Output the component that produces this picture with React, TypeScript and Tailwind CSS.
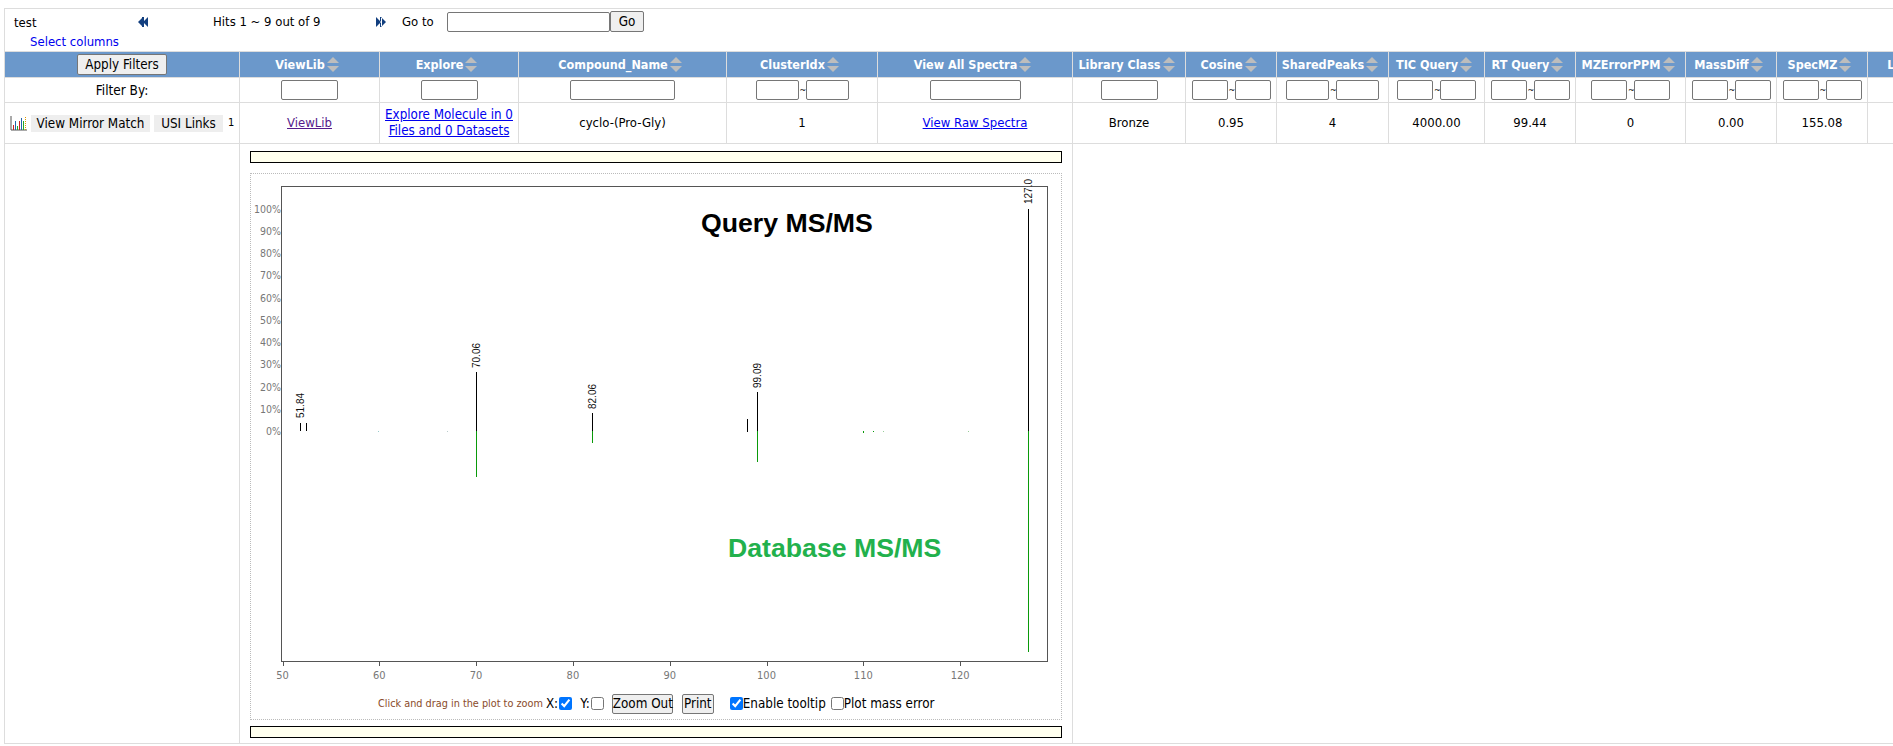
const font = "font-['DejaVu_Sans',sans-serif] [font-stretch:condensed]";

function Sort() {
  return (
    <svg width="12" height="15" viewBox="0 0 12 15" className="inline-block ml-[2px] align-[-3px]">
      <path d="M6 0 L12 6 H0 Z" fill="#bdbdbd" />
      <path d="M0 9 H12 L6 15 Z" fill="#bdbdbd" />
    </svg>
  );
}

function Box({ w }: { w: number }) {
  return <input type="text" style={{ width: w }} className="h-5 bg-white border border-[#767676] rounded-[2px] align-middle" />;
}

function Range({ w }: { w: number }) {
  return (
    <span className="inline-flex items-center justify-center gap-[1px]">
      <Box w={w} />
      <span className="text-[9px] w-[5px] leading-none">~</span>
      <Box w={w} />
    </span>
  );
}

const columns = [
  { w: 140, name: "ViewLib", input: 57, range: 0 },
  { w: 139, name: "Explore", input: 57, range: 0 },
  { w: 208, name: "Compound_Name", input: 105, range: 0 },
  { w: 151, name: "ClusterIdx", input: 0, range: 43 },
  { w: 195, name: "View All Spectra", input: 91, range: 0 },
  { w: 113, name: "Library Class", input: 57, range: 0 },
  { w: 91, name: "Cosine", input: 0, range: 36 },
  { w: 112, name: "SharedPeaks", input: 0, range: 43 },
  { w: 96, name: "TIC Query", input: 0, range: 36 },
  { w: 91, name: "RT Query", input: 0, range: 36 },
  { w: 110, name: "MZErrorPPM", input: 0, range: 36 },
  { w: 91, name: "MassDiff", input: 0, range: 36 },
  { w: 91, name: "SpecMZ", input: 0, range: 36 },
  { w: 140, name: "LibraryName", input: 57, range: 0 },
];

const cellValues = ["4000.00", "99.44", "0", "0.00", "155.08", ""];

function PlotIcon() {
  return (
    <svg width="17" height="16" viewBox="0 0 17 16" className="shrink-0">
      <path d="M1 1 V15 H17" fill="none" stroke="#555" strokeWidth="1" />
      <path d="M3.5 15 V10 M9.5 15 V6" stroke="#c22" strokeWidth="1" />
      <path d="M5.5 15 V6 M11.5 15 V3" stroke="#26a" strokeWidth="1" />
      <path d="M7.5 15 V11 M13.5 15 V6" stroke="#2a2" strokeWidth="1" />
      <path d="M15.5 15 V1" stroke="#d90" strokeWidth="1" strokeDasharray="1 1" />
    </svg>
  );
}

function Spectrum() {
  const ys = [0, 10, 20, 30, 40, 50, 60, 70, 80, 90, 100];
  const xs = [50, 60, 70, 80, 90, 100, 110, 120];
  const black: [number, number][] = [[50, 423], [56, 423], [226, 372], [342, 413], [497, 419], [507, 392], [778, 209]];
  const green: [number, number][] = [[226, 477], [342, 443], [507, 462], [778, 652]];
  const y0 = 431;
  const labels: [number, number, string][] = [[50, 418, "51.84"], [226, 368, "70.06"], [342, 409, "82.06"], [507, 388, "99.09"], [778, 204, "127.01"]];
  return (
    <svg width="810" height="516" viewBox="251 174 810 516" className="block">
      <defs>
        <clipPath id="frame"><rect x="250" y="179" width="810" height="511" /></clipPath>
      </defs>
      <rect x="281.5" y="186.5" width="766" height="475" fill="none" stroke="#555" strokeWidth="1" />
      {ys.map((v) => (
        <text key={v} x="281" y={435 - v * 2.225} textAnchor="end" fontSize="10.5" fill="#777" fontFamily="'DejaVu Sans'" style={{ fontStretch: "condensed" }}>{v}%</text>
      ))}
      {xs.map((v) => {
        const x = 282.5 + (v - 50) * 9.68;
        return (
          <g key={v}>
            <path d={`M${Math.round(x) + 0.5} 662 V666`} stroke="#555" />
            <text x={x} y="679" textAnchor="middle" fontSize="11" fill="#777" fontFamily="'DejaVu Sans'" style={{ fontStretch: "condensed" }}>{v}</text>
          </g>
        );
      })}
      {black.map(([x, t], i) => (
        <path key={i} d={`M${x + 250.5} ${t} V${i === 4 ? 432 : y0}`} stroke="#000" strokeWidth="1" />
      ))}
      {green.map(([x, b], i) => (
        <path key={i} d={`M${x + 250.5} ${y0} V${b}`} stroke="#0a9a0a" strokeWidth="1" />
      ))}
      {[[378, 431, 432, "#9cc"], [447, 431, 432, "#bcc"], [863, 431, 433, "#0a9a0a"], [873, 431, 432, "#0a9a0a"], [883, 431, 432, "#9c9"], [968, 431, 432, "#9c9"]].map(([x, a, b, c], i) => (
        <path key={i} d={`M${Number(x) + 0.5} ${a} V${b}`} stroke={String(c)} />
      ))}
      <g clipPath="url(#frame)">
        {labels.map(([x, y, t]) => (
          <text key={t} transform={`translate(${x + 254} ${y}) rotate(-90)`} fontSize="10" fill="#111" fontFamily="'Liberation Sans'" style={{ fontStretch: "normal" }}>{t}</text>
        ))}
      </g>
      <text x="701" y="232" fontSize="26.67" fontWeight="700" fill="#000" fontFamily="'Liberation Sans'" style={{ fontStretch: "normal" }}>Query MS/MS</text>
      <text x="728" y="557" fontSize="26.67" fontWeight="700" fill="#22b14c" fontFamily="'Liberation Sans'" style={{ fontStretch: "normal" }}>Database MS/MS</text>
    </svg>
  );
}

export default function App() {
  return (
    <div className={`w-[1893px] h-[746px] overflow-hidden bg-white pt-2 pl-1 text-[13px] leading-[16px] text-black ${font}`}>
      <table className="table-fixed border-collapse w-[2303px]">
        <colgroup>
          <col className="w-[235px]" />
          {columns.map((c) => (
            <col key={c.name} style={{ width: c.w }} />
          ))}
          <col className="w-[300px]" />
        </colgroup>
        <tbody>
          <tr className="h-[43px]">
            <td colSpan={16} className="border border-[#dddddd] p-0 align-top">
              <div className="flex items-center h-[23px] mt-[1px] mb-[1px]">
                <span className="ml-[9px] w-[124px] mt-[3px]">test</span>
                <svg width="11" height="10" viewBox="0 0 11 10" className="shrink-0">
                  <path d="M5 0 V10 L0 5 Z M10 0 V10 L5 5 Z M4 0 H6 V10 H4 Z" fill="#123f7f" />
                </svg>
                <span className="ml-[64px] w-[162px]">Hits 1 ~ 9 out of 9</span>
                <svg width="11" height="10" viewBox="0 0 11 10" className="shrink-0">
                  <path d="M1 0 V10 L6 5 Z M6 0 V10 L11 5 Z M5 0 H7 V10 H5 Z" fill="#123f7f" />
                </svg>
                <span className="ml-[16px] w-[45px]">Go to</span>
                <input type="text" className="w-[163px] h-5 bg-white border border-[#767676] rounded-[2px]" />
                <button className="w-[34px] h-[21px] bg-[#efefef] border border-[#767676] rounded-[2px] text-[13.33px] leading-none">Go</button>
              </div>
              <div className="ml-[25px] text-[#0000ee]">Select columns</div>
            </td>
          </tr>
          <tr className="h-[26px] bg-[#6b98cb] text-white font-bold text-[12.5px]">
            <th className="border border-[#dddddd] p-0 font-normal text-black">
              <button className="w-[90px] h-[21px] bg-[#efefef] border border-[#767676] rounded-[2px] text-[13.33px] leading-none align-middle">Apply Filters</button>
            </th>
            {columns.map((c) => (
              <th key={c.name} className="border border-[#dddddd] p-0 pr-[5px] whitespace-nowrap overflow-hidden text-center">
                {c.name}
                <Sort />
              </th>
            ))}
            <th className="border border-[#dddddd] p-0" />
          </tr>
          <tr className="h-[25px]">
            <td className="border border-[#dddddd] p-0 text-center text-[13.5px]">Filter By:</td>
            {columns.map((c) => (
              <td key={c.name} className="border border-[#dddddd] p-0 text-center">
                {c.range ? <Range w={c.range} /> : <Box w={c.input} />}
              </td>
            ))}
            <td className="border border-[#dddddd] p-0" />
          </tr>
          <tr className="h-[41px]">
            <td className="border border-[#dddddd] p-0">
              <div className="flex items-center pl-[5px] text-[13.33px]">
                <PlotIcon />
                <span className="ml-[4px] w-[119px] h-[17px] leading-[17px] text-center bg-[#eeeeee]">View Mirror Match</span>
                <span className="ml-[4px] w-[69px] h-[17px] leading-[17px] text-center bg-[#eeeeee]">USI Links</span>
                <span className="ml-[5px] text-[11px]">1</span>
              </div>
            </td>
            <td className="border border-[#dddddd] p-0 text-center"><a className="underline text-[#551a8b]">ViewLib</a></td>
            <td className="border border-[#dddddd] p-0 text-center"><a className="underline text-[13.3px] text-[#0000ee]">Explore Molecule in 0<br />Files and 0 Datasets</a></td>
            <td className="border border-[#dddddd] p-0 text-center">cyclo-(Pro-Gly)</td>
            <td className="border border-[#dddddd] p-0 text-center">1</td>
            <td className="border border-[#dddddd] p-0 text-center"><a className="underline text-[#0000ee]">View Raw Spectra</a></td>
            <td className="border border-[#dddddd] p-0 text-center">Bronze</td>
            <td className="border border-[#dddddd] p-0 text-center">0.95</td>
            <td className="border border-[#dddddd] p-0 text-center">4</td>
            {cellValues.map((v, i) => (
              <td key={i} className="border border-[#dddddd] p-0 text-center">{v}</td>
            ))}
            <td className="border border-[#dddddd] p-0" />
          </tr>
          <tr className="h-[600px]">
            <td className="border border-[#dddddd] p-0" />
            <td colSpan={5} className="border border-[#dddddd] p-0 align-top">
              <div className="mx-[10px] mt-[7px] flex flex-col">
                <div className="h-3 bg-[#ffffee] border border-black" />
                <div className="mt-[10px] h-[547px] border border-dotted border-[#bbbbbb]">
                  <Spectrum />
                  <div className="flex items-center h-[26px] mt-[1px] text-[13.33px]">
                    <span className="ml-[127px] text-[10.8px] text-[#8a4b2a]">Click and drag in the plot to zoom</span>
                    <span className="ml-[3px]">X:</span>
                    <input type="checkbox" defaultChecked className="ml-[1px] mb-[2px] w-[13px] h-[13px]" />
                    <span className="ml-[8px]">Y:</span>
                    <input type="checkbox" className="ml-[1px] mb-[2px] w-[13px] h-[13px]" />
                    <button className="ml-[8px] w-[61px] h-[20px] px-0 whitespace-nowrap bg-[#efefef] border border-[#767676] rounded-[2px] leading-none">Zoom Out</button>
                    <button className="ml-[9px] w-[32px] h-[20px] px-0 bg-[#efefef] border border-[#767676] rounded-[2px] leading-none">Print</button>
                    <input type="checkbox" defaultChecked className="ml-[16px] mb-[2px] w-[13px] h-[13px]" />
                    <span>Enable tooltip</span>
                    <input type="checkbox" className="ml-[5px] mb-[2px] w-[13px] h-[13px]" />
                    <span>Plot mass error</span>
                  </div>
                </div>
                <div className="mt-[6px] h-3 bg-[#ffffee] border border-black" />
              </div>
            </td>
            <td colSpan={10} className="border border-[#dddddd] p-0" />
          </tr>
        </tbody>
      </table>
    </div>
  );
}
